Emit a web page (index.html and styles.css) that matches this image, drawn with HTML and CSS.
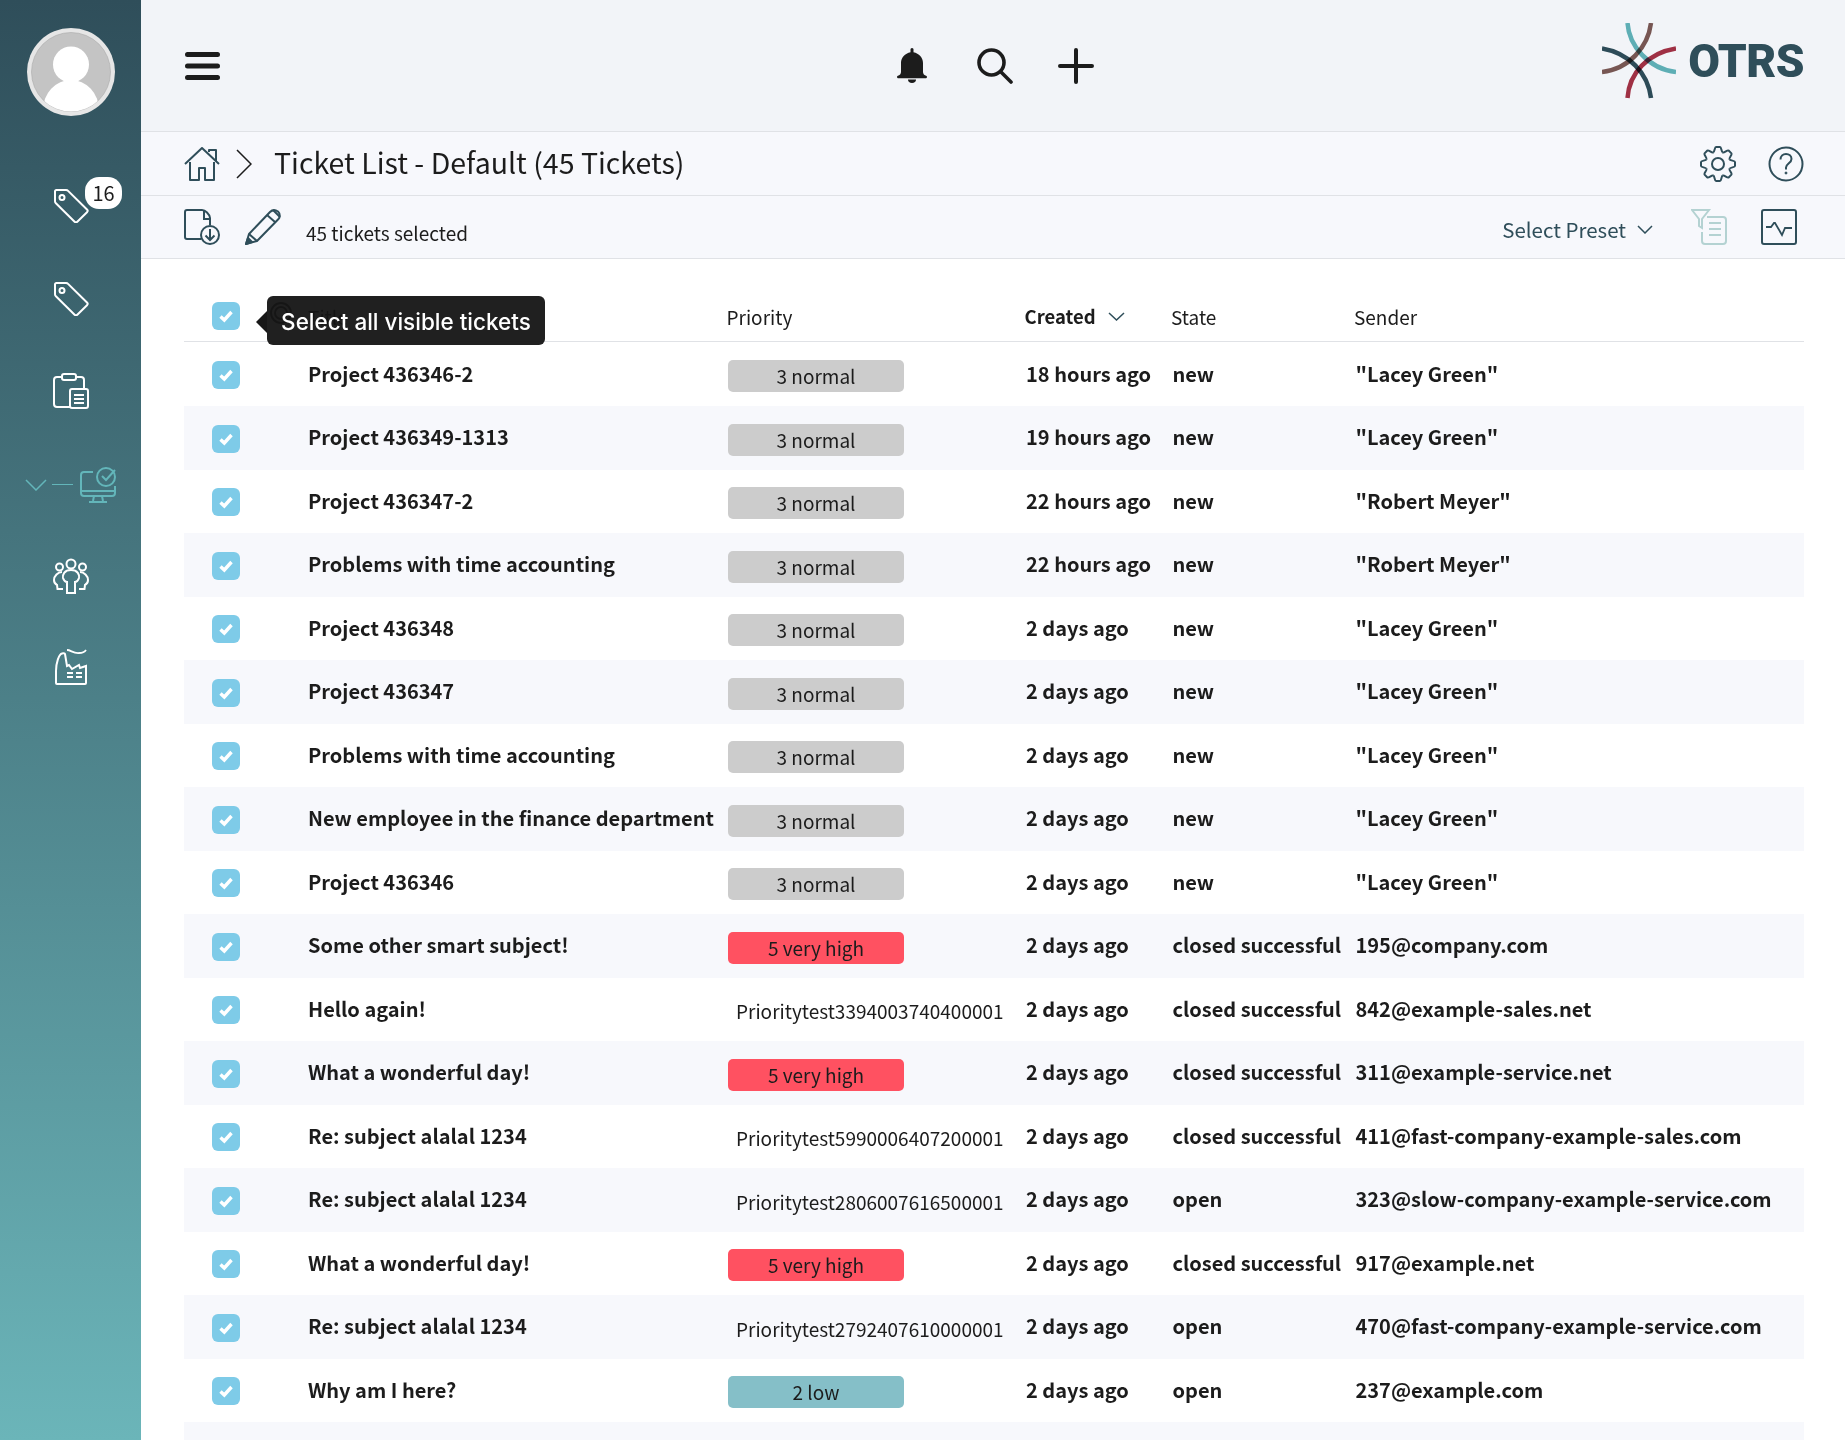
FILE: index.html
```html
<!DOCTYPE html>
<html lang="en">
<head>
<meta charset="UTF-8">
<title>Ticket List - OTRS</title>
<link rel="stylesheet" href="styles.css">
</head>
<body>
<svg class="defs" width="0" height="0">
	<symbol id="tag" viewBox="0 0 36 34"><path d="M2 2.500c0-.8.7-1.500 1.500-1.500H13c.8 0 1.600.3 2.100.9L34 20.500c.8.8.8 1.900 0 2.700l-9.700 9.500c-.8.8-1.900.8-2.700 0L2.900 14.300C2.300 13.700 2 13 2 12.200z" fill="none" stroke="currentColor" stroke-width="2"/><circle cx="9" cy="8.500" r="2.500" fill="none" stroke="currentColor" stroke-width="2"/></symbol>
	<symbol id="tick" viewBox="0 0 28 28"><rect width="28" height="28" rx="6" fill="#7ecbe8"/><path d="M8.500 14.500l3.800 3.500 7.200-8" fill="none" stroke="#fff" stroke-width="3.400"/></symbol>
	<path id="tooth" d="M13.200 6.500C14.800 6 14.500 1 16 1h4c1.500 0 1.200 5 2.800 5.500"/>
</svg>
<div class="app">
	<nav class="sidebar">
		<div class="avatar">
			<svg width="88" height="88" viewBox="0 0 88 88"><circle cx="44" cy="44" r="44" fill="#e6e6e6"/><circle cx="44" cy="44" r="39.500" fill="#c4c4c4" stroke="#aaa" stroke-width=".6"/><clipPath id="av"><circle cx="44" cy="44" r="39.500"/></clipPath><g clip-path="url(#av)" fill="#fff"><circle cx="44" cy="36.500" r="18"/><ellipse cx="44" cy="82" rx="28" ry="30"/></g></svg>
		</div>
		<a class="nav-item"><svg width="36" height="34"><use href="#tag"/></svg><span class="badge">16</span></a>
		<a class="nav-item"><svg width="36" height="34"><use href="#tag"/></svg></a>
		<a class="nav-item">
			<svg width="36" height="36" viewBox="0 0 36 36" fill="none" stroke="currentColor" stroke-width="2"><path d="M17 34H4c-1.500 0-3-1-3-3V7c0-2 1.500-3 3-3h4M24 4h4c1.500 0 3 1 3 3v8"/><rect x="9" y="1" width="14" height="6" rx="2"/><rect x="17" y="16" width="18" height="19" rx="2"/><path d="M21 22h10M21 26h10M21 30h10"/></svg>
		</a>
		<a class="nav-item nav-active">
			<svg width="22" height="12" viewBox="0 0 22 12" fill="none" stroke="currentColor" stroke-width="1.500"><path d="M1 1l10 10L21 1"/></svg>
			<span class="nav-dash"></span>
			<svg width="36" height="36" viewBox="0 0 36 36" fill="none" stroke="currentColor" stroke-width="2"><path d="M13 5H4C2 5 1 6 1 8v18c0 2 1 3 3 3h28c2 0 3-1 3-3v-7M1 24h34M14 29l-1 5M22 29l1 5M9 35h18"/><circle cx="26" cy="10" r="9"/><path d="M22 9l4 4 9-10"/></svg>
		</a>
		<a class="nav-item">
			<svg width="36" height="36" viewBox="0 0 36 36" fill="none" stroke="currentColor" stroke-width="2"><circle cx="18" cy="6" r="4.500"/><circle cx="6.500" cy="9" r="3.500"/><circle cx="29.500" cy="9" r="3.500"/><path d="M14 35V24c-1 0-3-1-4-4-.5-3 1-8 8-8s8.500 5 8 8c-1 3-3 4-4 4v11z"/><path d="M9 14c-4 0-8 4-8 8 0 2 1 4 3 5l.5 4H10M27 14c4 0 8 4 8 8 0 2-1 4-3 5l-.5 4H26"/></svg>
		</a>
		<a class="nav-item nav-factory">
			<svg width="32" height="36" viewBox="0 0 32 36" fill="none" stroke="currentColor" stroke-width="2"><path d="M1 34c0 .8.4 1 1 1h28c.6 0 1-.2 1-1V17l-6 2-1-3-7 4-3-4-2 1-2-12c-.2-1-2-1-3-.5C4 5 1 14 1 22z"/><path d="M12 1c4 0 6 3.500 12 3 4 0 6-1.500 7-3M12 24h6M21 24h6M12 28h6M21 28h6" stroke-width="1.800"/></svg>
		</a>
	</nav>
	<main class="main">
		<header class="topbar">
			<svg class="hamburger" width="35" height="28" viewBox="0 0 35 28" stroke="#1c1c1c" stroke-width="5" stroke-linecap="round"><path d="M2.500 2.500h30M2.500 14h30M2.500 25.500h30"/></svg>
			<div class="top-actions">
				<svg class="act-bell" width="30" height="36" viewBox="0 0 30 36" fill="#1c1c1c"><path d="M15 0c1 0 1.500.8 1.500 1.500v2.800C22 5.500 26 9.500 26 15v9c0 1.500 1 3 2.500 3.500.8.300 1.500.5 1.500 1.500s-.8 1.200-1.500 1.200h-27C.8 30.200 0 30 0 29s.7-1.200 1.500-1.500C3 27 4 25.500 4 24v-9c0-5.500 4-9.500 9.500-10.700V1.500C13.500.8 14 0 15 0z"/><path d="M11 31.500h8c0 2-1.500 3.500-4 3.500s-4-1.500-4-3.500z"/></svg>
				<svg width="36" height="36" viewBox="0 0 36 36" fill="none" stroke="#1c1c1c" stroke-width="3.600" stroke-linecap="round"><circle cx="14.500" cy="14.500" r="12.500"/><path d="M23.500 23.500L34 34"/></svg>
				<svg width="36" height="36" viewBox="0 0 36 36" stroke="#1c1c1c" stroke-width="4" stroke-linecap="round"><path d="M18 2v32M2 18h32"/></svg>
			</div>
			<div class="logo">
				<svg class="logo-mark" width="74" height="76" viewBox="0 0 74 76" fill="none" stroke-width="4.500"><path stroke="#63b6ba" d="M25.500 0C27 22 46 46 74 49"/><path stroke="#7d5a55" d="M49 0C46 24 27 46 0 49"/><path stroke="#2f4e5a" d="M0 25.500C27 30 46 50 49 75"/><path stroke="#a83246" d="M74 25.500C46 30 27 50 25.500 75"/></svg>
				<span class="logo-text">OTRS</span>
			</div>
		</header>
		<div class="crumbs">
			<svg width="36" height="34" viewBox="0 0 36 34" fill="none" stroke="#2f4e5a" stroke-width="2" stroke-linejoin="round"><path d="M1 17L18 1l17 16M25 5V3h7v11M6 15v18h9V21h6v12h9V15"/></svg>
			<svg class="crumb-sep" width="16" height="30" viewBox="0 0 16 30" fill="none" stroke="#1c1c1c" stroke-width="1.500"><path d="M1 1l14 14L1 29"/></svg>
			<h1 class="page-title">Ticket List - Default (45 Tickets)</h1>
			<div class="crumb-actions">
				<svg width="36" height="36" viewBox="0 0 36 36" fill="none" stroke="#2f4e5a" stroke-width="2"><use href="#tooth"/><use href="#tooth" transform="rotate(45 18 18)"/><use href="#tooth" transform="rotate(90 18 18)"/><use href="#tooth" transform="rotate(135 18 18)"/><use href="#tooth" transform="rotate(180 18 18)"/><use href="#tooth" transform="rotate(225 18 18)"/><use href="#tooth" transform="rotate(270 18 18)"/><use href="#tooth" transform="rotate(315 18 18)"/><circle cx="18" cy="18" r="6"/></svg>
				<svg width="36" height="36" viewBox="0 0 36 36" fill="none" stroke="#2f4e5a" stroke-width="2"><circle cx="18" cy="18" r="16.500"/><path d="M12.500 13.500c0-3.500 2.500-5.500 5.500-5.500s5.500 2 5.500 5c0 4-5 4.500-5.500 8.500v2"/><circle cx="18" cy="27" r="1" fill="#2f4e5a" stroke-width="1"/></svg>
			</div>
		</div>
		<div class="toolbar">
			<svg width="36" height="36" viewBox="0 0 36 36" fill="none" stroke="#2f4e5a" stroke-width="2"><path d="M17 30H3c-1.200 0-2-.8-2-2V3c0-1.200.8-2 2-2h15c1.500 0 3 .5 5 2.500 2 2 3 4 3 5.500v7M20 1v9h6"/><circle cx="26" cy="26" r="9"/><path d="M26 20v11M21.500 26.500L26 31l4.500-4.500"/></svg>
			<svg class="tool-pen" width="36" height="36" viewBox="0 0 36 36" fill="none" stroke="#2f4e5a" stroke-width="2" stroke-linejoin="round"><path d="M1 35l3-10L25 3c2-2 5-2.500 8-.5 2.500 2.500 2 6 .5 7.500L12 32z"/><path d="M4 25l8 7M22 6l8 7M28 1l7 7"/><path d="M1 35l2-6 4 4z" fill="#2f4e5a"/></svg>
			<span class="selected-count">45 tickets selected</span>
			<div class="tool-right">
				<span class="preset">Select Preset</span>
				<svg class="preset-chev" width="16" height="9" viewBox="0 0 16 9" fill="none" stroke="#2f4e5a" stroke-width="1.500"><path d="M1 1l7 7 7-7"/></svg>
				<svg class="tool-filter" width="36" height="36" viewBox="0 0 36 36" fill="none" stroke="#b4d2d2" stroke-width="2"><path d="M1 1h17l-7 9v9l-3-2v-7z"/><path d="M16 8h16c2 0 3 1 3 3v21c0 2-1 3-3 3H14c-2 0-3-1-3-3V23M18 14h12M18 20h12M18 26h12"/></svg>
				<svg class="tool-graph" width="36" height="36" viewBox="0 0 36 36" fill="none" stroke="#2f4e5a" stroke-width="2"><rect x="1" y="1" width="34" height="34" rx="2"/><path d="M5 18h5l3-4h1l7 12 3-7h7" stroke-width="1.800"/></svg>
			</div>
		</div>
		<section class="tickets">
			<div class="row head-row">
				<svg class="check" width="28" height="28"><use href="#tick"/></svg>
				<div class="head-title"><svg width="28" height="28" viewBox="0 0 28 28" fill="none" stroke="#333" stroke-width="2"><circle cx="14" cy="11" r="10"/><circle cx="14" cy="11" r="6"/></svg><span>Title</span></div>
				<div class="head-cell">Priority</div>
				<div class="head-cell sorted">Created <svg width="17" height="9" viewBox="0 0 17 9" fill="none" stroke="#2f4e5a" stroke-width="1.500"><path d="M1 1l7.500 7L16 1"/></svg></div>
				<div class="head-cell">State</div>
				<div class="head-cell">Sender</div>
				<div class="tooltip">Select all visible tickets</div>
			</div>
			<div class="row"><svg class="check" width="28" height="28"><use href="#tick"/></svg><div class="subject">Project 436346-2</div><div class="prio normal">3 normal</div><div class="cell">18 hours ago</div><div class="cell">new</div><div class="cell">"Lacey Green"</div></div>
			<div class="row"><svg class="check" width="28" height="28"><use href="#tick"/></svg><div class="subject">Project 436349-1313</div><div class="prio normal">3 normal</div><div class="cell">19 hours ago</div><div class="cell">new</div><div class="cell">"Lacey Green"</div></div>
			<div class="row"><svg class="check" width="28" height="28"><use href="#tick"/></svg><div class="subject">Project 436347-2</div><div class="prio normal">3 normal</div><div class="cell">22 hours ago</div><div class="cell">new</div><div class="cell">"Robert Meyer"</div></div>
			<div class="row"><svg class="check" width="28" height="28"><use href="#tick"/></svg><div class="subject">Problems with time accounting</div><div class="prio normal">3 normal</div><div class="cell">22 hours ago</div><div class="cell">new</div><div class="cell">"Robert Meyer"</div></div>
			<div class="row"><svg class="check" width="28" height="28"><use href="#tick"/></svg><div class="subject">Project 436348</div><div class="prio normal">3 normal</div><div class="cell">2 days ago</div><div class="cell">new</div><div class="cell">"Lacey Green"</div></div>
			<div class="row"><svg class="check" width="28" height="28"><use href="#tick"/></svg><div class="subject">Project 436347</div><div class="prio normal">3 normal</div><div class="cell">2 days ago</div><div class="cell">new</div><div class="cell">"Lacey Green"</div></div>
			<div class="row"><svg class="check" width="28" height="28"><use href="#tick"/></svg><div class="subject">Problems with time accounting</div><div class="prio normal">3 normal</div><div class="cell">2 days ago</div><div class="cell">new</div><div class="cell">"Lacey Green"</div></div>
			<div class="row"><svg class="check" width="28" height="28"><use href="#tick"/></svg><div class="subject">New employee in the finance department</div><div class="prio normal">3 normal</div><div class="cell">2 days ago</div><div class="cell">new</div><div class="cell">"Lacey Green"</div></div>
			<div class="row"><svg class="check" width="28" height="28"><use href="#tick"/></svg><div class="subject">Project 436346</div><div class="prio normal">3 normal</div><div class="cell">2 days ago</div><div class="cell">new</div><div class="cell">"Lacey Green"</div></div>
			<div class="row"><svg class="check" width="28" height="28"><use href="#tick"/></svg><div class="subject">Some other smart subject!</div><div class="prio high">5 very high</div><div class="cell">2 days ago</div><div class="cell">closed successful</div><div class="cell">195@company.com</div></div>
			<div class="row"><svg class="check" width="28" height="28"><use href="#tick"/></svg><div class="subject">Hello again!</div><div class="prio plain">Prioritytest3394003740400001</div><div class="cell">2 days ago</div><div class="cell">closed successful</div><div class="cell">842@example-sales.net</div></div>
			<div class="row"><svg class="check" width="28" height="28"><use href="#tick"/></svg><div class="subject">What a wonderful day!</div><div class="prio high">5 very high</div><div class="cell">2 days ago</div><div class="cell">closed successful</div><div class="cell">311@example-service.net</div></div>
			<div class="row"><svg class="check" width="28" height="28"><use href="#tick"/></svg><div class="subject">Re: subject alalal 1234</div><div class="prio plain">Prioritytest5990006407200001</div><div class="cell">2 days ago</div><div class="cell">closed successful</div><div class="cell">411@fast-company-example-sales.com</div></div>
			<div class="row"><svg class="check" width="28" height="28"><use href="#tick"/></svg><div class="subject">Re: subject alalal 1234</div><div class="prio plain">Prioritytest2806007616500001</div><div class="cell">2 days ago</div><div class="cell">open</div><div class="cell">323@slow-company-example-service.com</div></div>
			<div class="row"><svg class="check" width="28" height="28"><use href="#tick"/></svg><div class="subject">What a wonderful day!</div><div class="prio high">5 very high</div><div class="cell">2 days ago</div><div class="cell">closed successful</div><div class="cell">917@example.net</div></div>
			<div class="row"><svg class="check" width="28" height="28"><use href="#tick"/></svg><div class="subject">Re: subject alalal 1234</div><div class="prio plain">Prioritytest2792407610000001</div><div class="cell">2 days ago</div><div class="cell">open</div><div class="cell">470@fast-company-example-service.com</div></div>
			<div class="row"><svg class="check" width="28" height="28"><use href="#tick"/></svg><div class="subject">Why am I here?</div><div class="prio low">2 low</div><div class="cell">2 days ago</div><div class="cell">open</div><div class="cell">237@example.com</div></div>
			<div class="row"></div>
		</section>
	</main>
</div>
</body>
</html>
```

FILE: styles.css
```css
* {
	margin: 0;
	padding: 0;
	box-sizing: border-box;
}

html, body {
	height: 1440px;
	overflow: hidden;
}

body {
	font-family: "Noto Sans CJK SC", "Liberation Sans", sans-serif;
	color: #1c1c1c;
	background: #fff;
}

svg {
	display: block;
	flex: none;
}

.defs {
	position: absolute;
}

.app {
	display: flex;
	height: 1440px;
}

/* left bar */
.sidebar {
	width: 141px;
	flex: none;
	display: flex;
	flex-direction: column;
	align-items: stretch;
	padding-top: 28px;
	color: #fff;
	background: linear-gradient(#2f4e5a, #6bb5b9);
}

.avatar {
	display: flex;
	justify-content: center;
	height: 132px;
}

.nav-item {
	position: relative;
	height: 92.5px;
	display: flex;
	align-items: center;
	justify-content: center;
}

.badge {
	position: absolute;
	left: 85px;
	top: 17px;
	width: 37px;
	height: 32px;
	border-radius: 14px;
	background: #fff;
	color: #1c1c1c;
	font-size: 20px;
	line-height: 31px;
	text-align: center;
}

.nav-active {
	justify-content: flex-start;
	gap: 5px;
	padding: 2px 0 0 25px;
	color: #63b6ba;
}

.nav-dash {
	width: 21px;
	border-top: 1.5px solid #63b6ba;
	margin-right: 2px;
}

.nav-factory {
	padding-bottom: 4px;
}

/* right side */
.main {
	flex: 1;
	min-width: 0;
}

.topbar {
	height: 132px;
	display: grid;
	grid-template-columns: 1fr auto 1fr;
	align-items: center;
	padding: 0 41px 0 46px;
	background: #f2f4f8;
	border-bottom: 1px solid #e0e2e6;
}

.hamburger {
	margin-left: -2px;
}

.top-actions {
	display: flex;
	align-items: center;
	gap: 45.5px;
}

.act-bell {
	margin-right: 4px;
}

.logo {
	display: flex;
	align-items: center;
	justify-content: flex-end;
	gap: 12px;
	margin-bottom: 9px;
}

.logo-mark path {
	mix-blend-mode: multiply;
}

.logo-text {
	font-family: "Roboto", "Liberation Sans", sans-serif;
	font-weight: 900;
	font-size: 46px;
	line-height: 1;
	letter-spacing: -.5px;
	color: #2f4e5a;
}

.crumbs {
	height: 64px;
	display: flex;
	align-items: center;
	padding: 0 41px 0 43px;
	background: #f7f8fc;
	border-bottom: 1px solid #e0e2e6;
}

.crumb-sep {
	margin-left: 16px;
}

.page-title {
	margin-left: 22px;
	padding-bottom: 2px;
	font-size: 28.5px;
	font-weight: 400;
	line-height: 1;
}

.crumb-actions {
	margin-left: auto;
	display: flex;
	gap: 32px;
}

.toolbar {
	height: 63px;
	display: flex;
	align-items: center;
	padding: 0 48px 0 43px;
	background: #f7f8fc;
	border-bottom: 1px solid #e0e2e6;
}

.tool-pen {
	margin-left: 25px;
}

.selected-count {
	margin-left: 25px;
	padding-top: 10px;
	font-size: 19px;
}

.tool-right {
	margin-left: auto;
	display: flex;
	align-items: center;
}

.preset {
	padding-top: 4px;
	font-size: 20.5px;
	color: #2f4e5a;
}

.preset-chev {
	margin-left: 11px;
	margin-top: 5px;
}

.tool-filter {
	margin-left: 38px;
}

.tool-graph {
	margin-left: 34px;
}

/* list */
.tickets {
	padding: 20px 41px 0 43px;
}

.row {
	position: relative;
	height: 63.5px;
	display: grid;
	grid-template-columns: 124px 420px 298px 146.5px 183px 1fr;
	align-items: center;
	font-size: 20px;
	font-weight: 700;
	white-space: nowrap;
}

.subject, .cell {
	padding-bottom: 2px;
}

.row .check {
	margin-left: 28px;
	margin-top: 2px;
}

.row:nth-child(odd) {
	background: #f7f8fc;
}

.head-row {
	height: 63px;
	margin-bottom: .5px;
	padding: 12px 0 0;
	border-bottom: 1px solid #e0e2e6;
	font-size: 19px;
	font-weight: 400;
}

.head-row:nth-child(odd) {
	background: none;
}

.head-row .check {
	margin-top: 0;
}

.head-title {
	display: flex;
	align-items: center;
	margin-left: -41px;
	gap: 13px;
}

.head-cell {
	margin-left: -1.5px;
}

.sorted {
	font-size: 18.5px;
	font-weight: 700;
	display: flex;
	align-items: center;
	gap: 12px;
}

.tooltip {
	position: absolute;
	left: 83px;
	top: 17px;
	width: 278px;
	height: 49px;
	border-radius: 6px;
	background: rgba(20, 20, 20, .95);
	color: #fff;
	font-family: "Inter", "Liberation Sans", sans-serif;
	font-size: 22.5px;
	font-weight: 500;
	line-height: 51px;
	text-align: center;
}

.tooltip::before {
	content: "";
	position: absolute;
	left: -11px;
	top: 15px;
	border: 11px solid transparent;
	border-left: 0;
	border-right-color: #181818;
}

.prio {
	width: 176px;
	height: 32px;
	margin-top: 4px;
	border-radius: 5px;
	font-size: 19px;
	font-weight: 400;
	line-height: 32px;
	text-align: center;
}

.normal {
	background: #ccc;
}

.high {
	background: #ff5161;
}

.low {
	background: #85bfc8;
}

.plain {
	padding-left: 8px;
	text-align: left;
}
```
